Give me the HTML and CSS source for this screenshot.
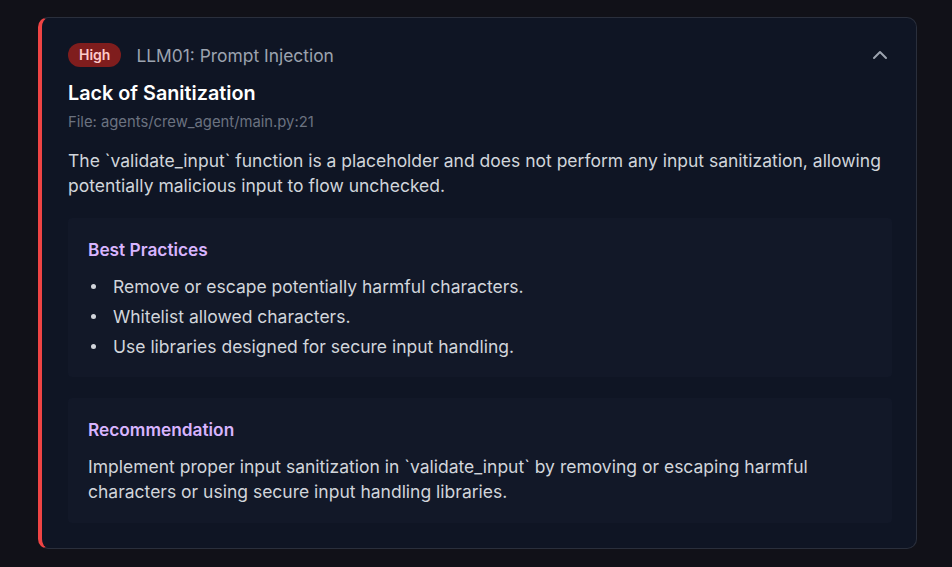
FILE: index.html
```html
<!DOCTYPE html>
<html lang="en">
<head>
  <meta charset="UTF-8">
  <meta name="viewport" content="width=device-width, initial-scale=1.0">
  <title>Finding</title>
  <link rel="stylesheet" href="styles.css">
</head>
<body>
  <div class="finding">
    <div class="finding-header">
      <div class="finding-tags">
        <span class="badge-high">High</span>
        <span class="category">LLM01: Prompt Injection</span>
      </div>
      <button class="toggle" type="button" aria-label="Collapse">
        <svg width="24" height="24" viewBox="0 0 24 24" fill="none" stroke="currentColor" stroke-width="2" stroke-linecap="round" stroke-linejoin="round">
          <polyline points="18 15 12 9 6 15"></polyline>
        </svg>
      </button>
    </div>

    <h2 class="finding-title">Lack of Sanitization</h2>
    <p class="file">File: agents/crew_agent/main.py:21</p>
    <p class="description">The `validate_input` function is a placeholder and does not perform any input sanitization, allowing potentially malicious input to flow unchecked.</p>

    <div class="panel">
      <h3>Best Practices</h3>
      <ul>
        <li>Remove or escape potentially harmful characters.</li>
        <li>Whitelist allowed characters.</li>
        <li>Use libraries designed for secure input handling.</li>
      </ul>
    </div>

    <div class="panel panel-last">
      <h3>Recommendation</h3>
      <p>Implement proper input sanitization in `validate_input` by removing or escaping harmful characters or using secure input handling libraries.</p>
    </div>
  </div>
</body>
</html>
```

FILE: styles.css
```css
body {
  font-family: Inter, "Noto Sans", sans-serif;
  margin: 0;
  padding: 17px 35px 19px 38px;
  background-color: #111118;
  color: #d1d5db;
}

.finding {
  background-color: #0f1524;
  border: 1px solid #2a2f3c;
  border-left: 4px solid #ef4444;
  border-radius: 10px;
  padding: 21px 24px 25px 26px;
}

.finding-header {
  display: flex;
  justify-content: space-between;
  align-items: center;
  height: 32px;
}

.finding-tags {
  display: flex;
  align-items: center;
  gap: 15px;
}

.badge-high {
  background-color: #7f1d1d;
  color: #fecaca;
  font-size: 14px;
  font-weight: 600;
  line-height: 24px;
  padding: 0 11px;
  border-radius: 12px;
}

.category {
  color: #9ca3af;
  font-size: 17.4px;
}

.toggle {
  background: none;
  border: none;
  padding: 0;
  color: #9ca3af;
  display: flex;
  cursor: pointer;
}

.finding-title {
  margin: 8px 0 0;
  font-size: 19.8px;
  font-weight: 600;
  line-height: 28px;
  color: #ffffff;
}

.file {
  margin: 5px 0 0;
  font-size: 14.8px;
  line-height: 20px;
  color: #6b7280;
}

.description {
  margin: 16px 0 0;
  font-size: 17.5px;
  line-height: 25px;
}

.panel {
  background-color: #121828;
  border-radius: 4px;
  padding: 20px 20px 18px;
  margin-top: 20px;
}

.panel-last {
  margin-top: 21px;
  padding-bottom: 19px;
}

.panel h3 {
  margin: 0;
  font-size: 17.3px;
  font-weight: 600;
  line-height: 24px;
  color: #d8b4fe;
}

.panel ul {
  margin: 12px 0 0;
  padding: 0;
  list-style: none;
}

.panel li {
  display: flex;
  align-items: center;
  font-size: 17.5px;
  line-height: 25px;
  margin-bottom: 5px;
}

.panel li::before {
  content: "";
  flex: none;
  width: 5px;
  height: 5px;
  margin: 0 17px 0 3px;
  border-radius: 50%;
  background-color: #d1d5db;
}

.panel li:last-child {
  margin-bottom: 0;
}

.panel p {
  margin: 12px 0 0;
  font-size: 17.5px;
  line-height: 25px;
}
```
